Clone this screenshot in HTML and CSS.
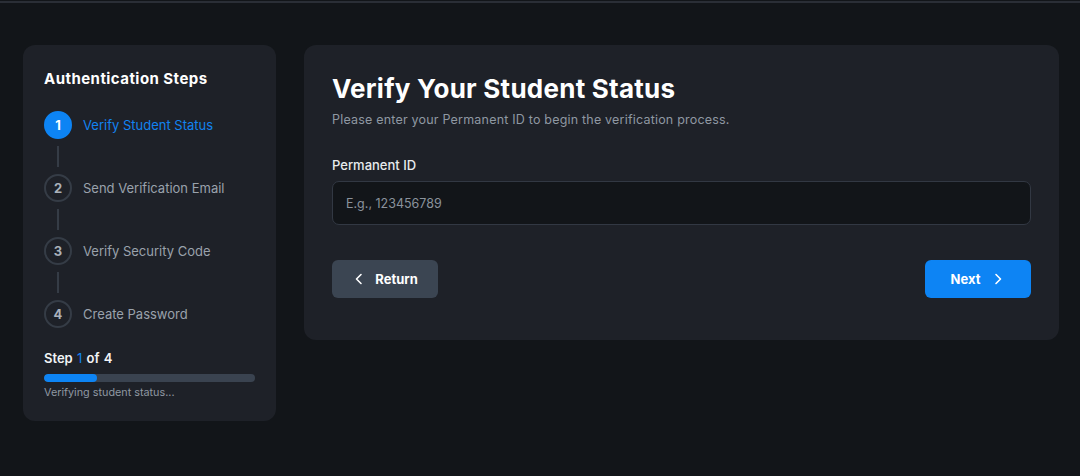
FILE: index.html
```html
<!DOCTYPE html>
<html lang="en">
<head>
<meta charset="utf-8">
<title>Verify Your Student Status</title>
<link rel="stylesheet" href="styles.css">
</head>
<body>
<div class="topbar"></div>
<main class="layout">
  <aside class="steps-card">
    <h2 class="steps-title">Authentication Steps</h2>
    <ol class="steps">
      <li class="step active"><span class="num">1</span><span class="label">Verify Student Status</span></li>
      <li class="connector"></li>
      <li class="step"><span class="num">2</span><span class="label">Send Verification Email</span></li>
      <li class="connector"></li>
      <li class="step"><span class="num">3</span><span class="label">Verify Security Code</span></li>
      <li class="connector"></li>
      <li class="step"><span class="num">4</span><span class="label">Create Password</span></li>
    </ol>
    <div class="progress-block">
      <div class="progress-label">Step <span class="accent">1</span> of 4</div>
      <div class="progress-track"><div class="progress-fill" style="width:25%"></div></div>
      <div class="progress-note">Verifying student status...</div>
    </div>
  </aside>
  <section class="form-card">
    <h1 class="form-title">Verify Your Student Status</h1>
    <p class="form-sub">Please enter your Permanent ID to begin the verification process.</p>
    <label class="field-label" for="pid">Permanent ID</label>
    <input class="field-input" id="pid" type="text" placeholder="E.g., 123456789">
    <div class="actions">
      <button class="btn btn-secondary" type="button">
        <svg width="14" height="14" viewBox="0 0 14 14" fill="none"><path d="M9 2.5L4.5 7L9 11.5" stroke="currentColor" stroke-width="1.6" stroke-linecap="round" stroke-linejoin="round"/></svg>
        <span>Return</span>
      </button>
      <button class="btn btn-primary" type="button">
        <span>Next</span>
        <svg width="14" height="14" viewBox="0 0 14 14" fill="none"><path d="M5 2.5L9.5 7L5 11.5" stroke="currentColor" stroke-width="1.6" stroke-linecap="round" stroke-linejoin="round"/></svg>
      </button>
    </div>
  </section>
</main>
</body>
</html>
```
FILE: styles.css
```css
* { box-sizing: border-box; }
html, body { margin: 0; padding: 0; }
body {
  background: #121519;
  font-family: "Inter", "Noto Sans", sans-serif;
  color: #ffffff;
  height: 476px;
  overflow: hidden;
}
.topbar {
  height: 3px;
  border-top: 1px solid #121519;
  background: #2a2e36;
}
.layout {
  display: grid;
  grid-template-columns: 253px 1fr;
  column-gap: 28px;
  align-items: start;
  padding: 42px 21px 0 23px;
}
.steps-card {
  background: #1e2128;
  border-radius: 12px;
  padding: 24px 21px 21px;
}
.steps-title {
  margin: 0;
  font-size: 15px;
  line-height: 20px;
  font-weight: 700;
  letter-spacing: 0.45px;
}
.steps {
  list-style: none;
  margin: 22px 0 0;
  padding: 0;
  display: flex;
  flex-direction: column;
}
.step {
  display: flex;
  align-items: center;
  gap: 11px;
  height: 28px;
}
.num {
  width: 28px;
  height: 28px;
  border-radius: 50%;
  border: 2px solid #353c46;
  display: flex;
  align-items: center;
  justify-content: center;
  font-size: 13px;
  font-weight: 700;
  color: #aab1ba;
  flex: none;
}
.label {
  font-size: 13px;
  color: #9aa2ac;
  letter-spacing: 0;
}
.step.active .num {
  background: #0d84f4;
  border-color: #0d84f4;
  color: #ffffff;
}
.step.active .label { color: #1283f0; }
.connector {
  width: 2px;
  height: 21px;
  margin: 7px 0 7px 13px;
  background: #353c46;
}
.progress-block { margin-top: 22px; }
.progress-label {
  font-size: 13px;
  font-weight: 600;
  line-height: 16px;
  color: #f2f4f6;
  word-spacing: 1px;
}
.accent { color: #1283f0; font-weight: 400; }
.progress-track {
  margin-top: 8px;
  height: 8px;
  border-radius: 4px;
  background: #3a4350;
  overflow: hidden;
}
.progress-fill {
  height: 100%;
  border-radius: 4px;
  background: #0d84f4;
}
.progress-note {
  margin-top: 4px;
  font-size: 10.8px;
  line-height: 14px;
  color: #8f98a2;
}
.form-card {
  background: #1e2128;
  border-radius: 12px;
  padding: 28px 28px 42px;
  display: flex;
  flex-direction: column;
}
.form-title {
  margin: 0;
  font-size: 26px;
  line-height: 32px;
  font-weight: 700;
  letter-spacing: 0.25px;
}
.form-sub {
  margin: 6px 0 0;
  font-size: 12.5px;
  line-height: 18px;
  color: #8f98a2;
  letter-spacing: 0.2px;
}
.field-label {
  margin-top: 27px;
  font-size: 13px;
  line-height: 18px;
  font-weight: 500;
  color: #e8ebee;
}
.field-input {
  margin-top: 7px;
  height: 44px;
  border-radius: 7px;
  border: 1px solid #323843;
  background: #121519;
  color: #e8ebee;
  padding: 0 13px;
  font-family: inherit;
  font-size: 12.5px;
  outline: none;
}
.field-input::placeholder { color: #8a929c; }
.actions {
  margin-top: 35px;
  display: flex;
  justify-content: space-between;
}
.btn {
  height: 38px;
  width: 106px;
  border: none;
  border-radius: 6px;
  display: flex;
  align-items: center;
  justify-content: center;
  gap: 9px;
  font-family: inherit;
  font-size: 13px;
  font-weight: 700;
  color: #ffffff;
  cursor: pointer;
}
.btn-secondary { background: #3b4552; }
.btn-primary { background: #0d84f4; gap: 11px; }
```
